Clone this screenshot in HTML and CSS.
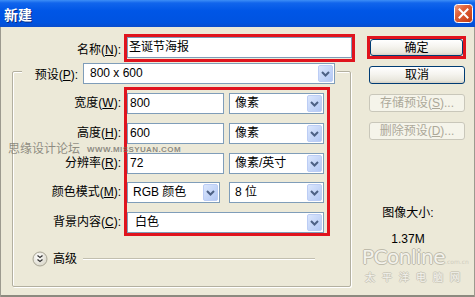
FILE: index.html
```html
<!DOCTYPE html>
<html>
<head>
<meta charset="utf-8">
<title>新建</title>
<link rel="stylesheet" href="styles.css">
</head>
<body>
<div class="window">
  <div class="titlebar">
    <span class="title">新建</span>
    <span class="close">
      <svg width="19" height="19" viewBox="0 0 19 19">
        <defs>
          <linearGradient id="cg" x1="0" y1="0" x2="1" y2="1">
            <stop offset="0" stop-color="#f0a48a"/>
            <stop offset="0.35" stop-color="#e2633b"/>
            <stop offset="1" stop-color="#c1370f"/>
          </linearGradient>
        </defs>
        <rect x="0.5" y="0.5" width="18" height="18" rx="3" fill="url(#cg)" stroke="#fff"/>
        <path d="M5.5 5.5 L13.5 13.5 M13.5 5.5 L5.5 13.5" stroke="#fff" stroke-width="2" stroke-linecap="square"/>
      </svg>
    </span>
  </div>
  <div class="content">
    <div class="left">
      <div class="name-row">
        <span class="lbl name-lbl">名称(<u>N</u>):</span>
        <div class="redbox name-box"><div class="input name-input">圣诞节海报</div></div>
      </div>
      <div class="group">
        <div class="preset-row">
          <span class="lbl preset-lbl">预设(<u>P</u>):</span>
          <div class="select preset-select"><span class="val">800 x 600</span><span class="arrow"><svg width="15" height="17" viewBox="0 0 15 17"><defs><linearGradient id="ag" x1="0" y1="0" x2="1" y2="1"><stop offset="0" stop-color="#dce7fd"/><stop offset="1" stop-color="#b1c7f4"/></linearGradient></defs><rect x="0.5" y="0.5" width="14" height="16" rx="1.5" fill="url(#ag)" stroke="#bccdf5"/><path d="M4 7 L7.5 10.5 L11 7" fill="none" stroke="#4d6185" stroke-width="2"/></svg></span></div>
        </div>
        <div class="fields">
          <div class="labels">
            <span>宽度(<u>W</u>):</span>
            <span>高度(<u>H</u>):</span>
            <span>分辨率(<u>R</u>):</span>
            <span>颜色模式(<u>M</u>):</span>
            <span>背景内容(<u>C</u>):</span>
          </div>
          <div class="redbox fields-box">
            <div class="frow">
              <div class="input num">800</div>
              <div class="select unit"><span class="val">像素</span><span class="arrow"><svg width="15" height="17" viewBox="0 0 15 17"><rect x="0.5" y="0.5" width="14" height="16" rx="1.5" fill="url(#ag)" stroke="#bccdf5"/><path d="M4 7 L7.5 10.5 L11 7" fill="none" stroke="#4d6185" stroke-width="2"/></svg></span></div>
            </div>
            <div class="frow">
              <div class="input num">600</div>
              <div class="select unit"><span class="val">像素</span><span class="arrow"><svg width="15" height="17" viewBox="0 0 15 17"><rect x="0.5" y="0.5" width="14" height="16" rx="1.5" fill="url(#ag)" stroke="#bccdf5"/><path d="M4 7 L7.5 10.5 L11 7" fill="none" stroke="#4d6185" stroke-width="2"/></svg></span></div>
            </div>
            <div class="frow">
              <div class="input num">72</div>
              <div class="select unit"><span class="val">像素/英寸</span><span class="arrow"><svg width="15" height="17" viewBox="0 0 15 17"><rect x="0.5" y="0.5" width="14" height="16" rx="1.5" fill="url(#ag)" stroke="#bccdf5"/><path d="M4 7 L7.5 10.5 L11 7" fill="none" stroke="#4d6185" stroke-width="2"/></svg></span></div>
            </div>
            <div class="frow">
              <div class="select mode"><span class="val">RGB 颜色</span><span class="arrow"><svg width="15" height="17" viewBox="0 0 15 17"><rect x="0.5" y="0.5" width="14" height="16" rx="1.5" fill="url(#ag)" stroke="#bccdf5"/><path d="M4 7 L7.5 10.5 L11 7" fill="none" stroke="#4d6185" stroke-width="2"/></svg></span></div>
              <div class="select unit"><span class="val">8 位</span><span class="arrow"><svg width="15" height="17" viewBox="0 0 15 17"><rect x="0.5" y="0.5" width="14" height="16" rx="1.5" fill="url(#ag)" stroke="#bccdf5"/><path d="M4 7 L7.5 10.5 L11 7" fill="none" stroke="#4d6185" stroke-width="2"/></svg></span></div>
            </div>
            <div class="frow">
              <div class="select bg"><span class="val">白色</span><span class="arrow"><svg width="15" height="17" viewBox="0 0 15 17"><rect x="0.5" y="0.5" width="14" height="16" rx="1.5" fill="url(#ag)" stroke="#bccdf5"/><path d="M4 7 L7.5 10.5 L11 7" fill="none" stroke="#4d6185" stroke-width="2"/></svg></span></div>
            </div>
          </div>
        </div>
        <div class="advanced">
          <svg class="chev" width="16" height="16" viewBox="0 0 16 16">
            <defs>
              <radialGradient id="rg" cx="0.4" cy="0.35" r="0.7">
                <stop offset="0" stop-color="#ffffff"/>
                <stop offset="1" stop-color="#d8d5c6"/>
              </radialGradient>
            </defs>
            <circle cx="8" cy="8" r="7" fill="url(#rg)" stroke="#a9a696"/>
            <path d="M5.5 4.5 L8 6.5 L10.5 4.5 M5.5 8.5 L8 10.5 L10.5 8.5" fill="none" stroke="#333" stroke-width="1.3"/>
          </svg>
          <span class="adv-lbl">高级</span>
          <span class="rule"></span>
        </div>
      </div>
    </div>
    <div class="right">
      <div class="redbox ok-box"><button class="btn ok">确定</button></div>
      <button class="btn">取消</button>
      <button class="btn" disabled>存储预设(<u>S</u>)...</button>
      <button class="btn" disabled>删除预设(<u>D</u>)...</button>
      <div class="info">
        <div>图像大小:</div>
        <div class="size">1.37M</div>
      </div>
    </div>
  </div>
  <div class="wm-missyuan">思缘设计论坛<span class="wm-url">WWW.MISSYUAN.COM</span></div>
  <div class="wm-pconline">
    <div class="pc-logo">PConline<span class="pc-com">.com.cn</span></div>
    <div class="pc-cn">太平洋电脑网</div>
  </div>
</div>
</body>
</html>
```

FILE: styles.css
```css
* { box-sizing: border-box; margin: 0; padding: 0; }
html, body { width: 475px; height: 297px; overflow: hidden; }
body {
  background: #ECE9D8;
  font-family: "Liberation Sans", "Noto Sans CJK SC", sans-serif;
  font-size: 12px;
  color: #000;
}
u { text-decoration: underline; }

.window {
  position: relative;
  width: 475px;
  height: 297px;
  background: #ECE9D8;
  box-shadow: inset 1px 0 #9c9a8f, inset -1px 0 #9c9a8f, inset 0 -2px #8c8a7f;
  overflow: hidden;
}

.titlebar {
  height: 27px;
  display: flex;
  align-items: center;
  justify-content: space-between;
  padding: 0 2px 0 4px;
  background: linear-gradient(#3d8ef6 0, #1165ec 3px, #0056e6 40%, #0053e0 85%, #0a4dcc 100%);
}
.title {
  color: #fff;
  font-weight: bold;
  font-size: 14px;
  line-height: 14px;
  font-family: "Noto Sans CJK SC", sans-serif;
  text-shadow: 1px 1px #0a2a80;
}
.close { width: 19px; height: 19px; display: block; }
.close svg { display: block; }

.content { display: flex; }
.left { width: 356px; }

.lbl { white-space: nowrap; }

.name-row {
  display: flex;
  align-items: center;
  margin-top: 7px;
}
.name-lbl { width: 121px; text-align: right; }

.redbox { border: 3px solid #e0141e; }
.name-box { margin-left: 3px; width: 231px; height: 28px; }
.name-input { height: 100%; line-height: 20px; }

.input {
  background: #fff;
  border: 1px solid #7f9db9;
  height: 21px;
  line-height: 19px;
  padding-left: 1px;
  white-space: nowrap;
}
.select {
  background: #fff;
  border: 1px solid #7f9db9;
  height: 21px;
  display: flex;
  align-items: center;
  justify-content: space-between;
  padding: 0 1px 0 5px;
  white-space: nowrap;
}
.select .val { line-height: 19px; }
.arrow { display: block; width: 15px; height: 17px; }
.arrow svg { display: block; }

.group {
  margin: 9px 0 0 12px;
  width: 339px;
  height: 216px;
  border: 1px solid #b3b0a0;
  border-radius: 2px;
  box-shadow: inset 1px 1px #fff, 1px 1px #fff;
}
.preset-row {
  display: flex;
  align-items: center;
  margin: -9px 0 0 9px;
  width: 315px;
  height: 21px;
  background: #ECE9D8;
}
.preset-lbl { width: 61px; padding-right: 5px; text-align: right; }
.preset-select { width: 252px; padding-left: 6px; }

.fields { display: flex; margin-top: 3px; }
.labels {
  width: 108px;
  padding-top: 6px;
  display: flex;
  flex-direction: column;
  gap: 8.75px;
  text-align: right;
}
.labels span { height: 21px; line-height: 21px; white-space: nowrap; }

.fields-box {
  margin-left: 3px;
  padding: 3px 3px 0 0;
  display: flex;
  flex-direction: column;
  gap: 8.75px;
}
.frow { display: flex; gap: 5px; }
.num { width: 97px; padding-left: 2px; }
.unit { width: 95px; }
.mode { width: 93px; margin-right: 4px; }
.bg { width: 197px; padding-left: 7px; }

.advanced {
  display: flex;
  align-items: center;
  margin-top: 15px;
  padding-left: 19px;
  height: 16px;
}
.chev { display: block; flex: none; }
.adv-lbl { margin-left: 5px; line-height: 16px; }
.rule {
  margin-left: 6px;
  width: 232px;
  height: 2px;
  border-top: 1px solid #c2bfaf;
  border-bottom: 1px solid #fff;
}

.right {
  width: 99px;
  margin-left: 11px;
  display: flex;
  flex-direction: column;
}
.ok-box { margin-top: 9px; height: 23px; width: 99px; }
.btn {
  display: block;
  width: 96px;
  height: 18px;
  margin: 10px 0 0 2px;
  border: 1px solid #003c74;
  border-radius: 3px;
  background: linear-gradient(#ffffff 0, #f5f4ef 45%, #e8e6dc 85%, #d6d0c5 100%);
  font: inherit;
  color: #000;
  text-align: center;
  line-height: 16px;
  padding: 0;
  white-space: nowrap;
}
.ok-box + .btn { margin-top: 7px; }
.btn.ok { width: 100%; height: 100%; margin: 0; }
.btn[disabled] {
  border-color: #c9c7ba;
  background: #f5f4ea;
  color: #aca899;
}

.info {
  margin: 66px 0 0 -17px;
  width: 116px;
  text-align: center;
  line-height: 14px;
}
.info .size { margin-top: 12px; }

.wm-missyuan {
  position: absolute;
  left: 8px;
  top: 141px;
  color: rgba(110, 108, 100, 0.75);
  font-family: "Noto Sans CJK SC", sans-serif;
  font-size: 12px;
  line-height: 14px;
  white-space: nowrap;
  pointer-events: none;
}
.wm-url {
  margin-left: 7px;
  font-family: "Liberation Sans", sans-serif;
  font-size: 8px;
  font-weight: bold;
  letter-spacing: 0.4px;
  vertical-align: 1px;
}

.wm-pconline {
  position: absolute;
  left: 362px;
  top: 248px;
  width: 110px;
  pointer-events: none;
  color: #f3f2ec;
}
.pc-logo {
  font-family: "DejaVu Sans", sans-serif;
  font-size: 20px;
  line-height: 18px;
  letter-spacing: -0.5px;
  text-shadow: -1px 0 #bebbab, 1px 0 #bebbab, 0 -1px #bebbab, 0 1px #bebbab;
  white-space: nowrap;
}
.pc-com {
  font-size: 6px;
  letter-spacing: 0;
  text-shadow: none;
  color: #cfccbf;
}
.pc-cn {
  font-family: "Noto Sans CJK SC", sans-serif;
  font-size: 10px;
  line-height: 11px;
  letter-spacing: 7px;
  padding-left: 3px;
  color: #f3f2ec;
  text-shadow: -1px 0 #cbc8ba, 1px 0 #cbc8ba, 0 -1px #cbc8ba, 0 1px #cbc8ba;
  white-space: nowrap;
}
```
